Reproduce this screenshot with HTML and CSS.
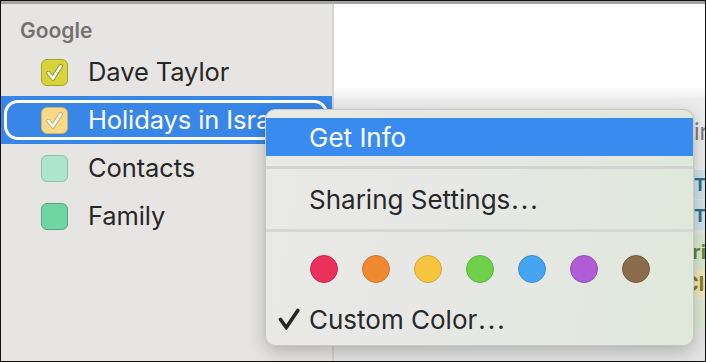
FILE: index.html
```html
<!DOCTYPE html>
<html>
<head>
<meta charset="utf-8">
<link rel="stylesheet" href="styles.css">
</head>
<body>
<div class="frame">
  <div class="topbar"></div>
  <div class="main">
    <aside class="sidebar">
      <div class="group">Google</div>
      <div class="row">
        <span class="box box-yellow"><svg viewBox="0 0 27 27" width="27" height="27"><path d="M7.5 14 L11.8 19.5 L19.8 7" class="ck-o"/><path d="M7.5 14 L11.8 19.5 L19.8 7" class="ck"/></svg></span>
        <span class="label">Dave Taylor</span>
      </div>
      <div class="row selected">
        <div class="ring">
          <span class="box box-pale"><svg viewBox="0 0 27 27" width="27" height="27"><path d="M7.5 14 L11.8 19.5 L19.8 7" class="ck-o light"/><path d="M7.5 14 L11.8 19.5 L19.8 7" class="ck"/></svg></span>
          <span class="label">Holidays in Israel</span>
        </div>
      </div>
      <div class="row">
        <span class="box box-mint"></span>
        <span class="label">Contacts</span>
      </div>
      <div class="row">
        <span class="box box-green"></span>
        <span class="label">Family</span>
      </div>
    </aside>
    <div class="divider"></div>
    <section class="calendar">
      <div class="cal-head"></div>
      <div class="cal-band"></div>
      <div class="cal-row r-gray"><span class="chip c-gray">Fair</span></div>
      <div class="cal-row r-blue"><span class="chip c-blue">T</span></div>
      <div class="cal-row r-blue2"><span class="chip c-blue">T</span></div>
      <div class="cal-row r-green"><span class="chip c-green">Fri</span></div>
      <div class="cal-row r-yellow"><span class="chip c-yellow">Cla</span></div>
      <div class="cal-row r-lgreen"><span class="chip c-lgreen"></span></div>
      <div class="cal-foot"></div>
    </section>
  </div>

  <div class="menu">
    <div class="item active">Get Info</div>
    <div class="sep"></div>
    <div class="item">Sharing Settings<span class="ell">...</span></div>
    <div class="sep sep2"></div>
    <div class="colors">
      <span class="dot d-red"></span>
      <span class="dot d-orange"></span>
      <span class="dot d-yellow"></span>
      <span class="dot d-green"></span>
      <span class="dot d-blue"></span>
      <span class="dot d-purple"></span>
      <span class="dot d-brown"></span>
    </div>
    <div class="item checked">
      <svg class="check" viewBox="0 0 22 22" width="22" height="22"><path d="M2.5 11.5 L8.3 19.5 L19.8 2.5"/></svg>
      Custom Color<span class="ell">...</span>
    </div>
  </div>
</div>
</body>
</html>
```

FILE: styles.css
```css
* { box-sizing: border-box; }
html, body { margin: 0; padding: 0; }
body {
  width: 706px;
  height: 362px;
  overflow: hidden;
  font-family: Inter, "Noto Sans", "Liberation Sans", sans-serif;
  background: #000;
}
.frame {
  position: relative;
  width: 706px;
  height: 362px;
  border: 1px solid #111;
  background: #e7e5e4;
  overflow: hidden;
  display: flex;
  flex-direction: column;
}
.topbar {
  height: 3px;
  background: #a4a4a4;
  flex: none;
}
.main {
  flex: 1;
  display: flex;
  min-height: 0;
}
.sidebar {
  width: 331px;
  flex: none;
  background: #e7e5e4;
}
.group {
  height: 44px;
  padding: 15px 0 0 19px;
  font-size: 21px;
  line-height: 24px;
  font-weight: 600;
  color: #737271;
}
.row {
  height: 48px;
  display: flex;
  align-items: center;
  padding-left: 40px;
  gap: 20px;
}
.row.selected {
  background: #3786e8;
  padding: 4px 4px 4px 3px;
}
.ring {
  flex: 1;
  height: 40px;
  border: 3px solid #fff;
  border-radius: 14px;
  display: flex;
  align-items: center;
  padding-left: 34px;
  gap: 20px;
}
.label {
  font-size: 25.5px;
  line-height: 30px;
  color: #272727;
  white-space: nowrap;
  letter-spacing: -0.1px;
}
.selected .label { color: #fff; }
.box {
  width: 27px;
  height: 27px;
  border-radius: 6px;
  flex: none;
  border: 1px solid;
  display: block;
  overflow: hidden;
}
.box svg { display: block; margin: -1px; }
.box-yellow { background: #d7d338; border-color: #a8a42b; }
.box-pale { background: #f6da89; border-color: #cbb163; }
.box-mint { background: #ace5cc; border-color: #8cc3aa; }
.box-green { background: #6fd5a3; border-color: #52ab80; }
.ck-o { fill: none; stroke: rgba(90, 85, 20, 0.55); stroke-width: 4.4; stroke-linecap: round; stroke-linejoin: round; }
.ck-o.light { stroke: rgba(150, 120, 50, 0.5); }
.ck { fill: none; stroke: #fff; stroke-width: 2.6; stroke-linecap: round; stroke-linejoin: round; }

.divider {
  width: 2px;
  flex: none;
  background: #d4d4d4;
}
.calendar {
  flex: 1;
  display: flex;
  flex-direction: column;
  background: #e6e6e6;
  min-width: 0;
}
.cal-head { height: 84px; background: #fff; flex: none; }
.cal-band { height: 10px; background: linear-gradient(#fbfbfb, #f1f1f1); flex: none; }
.cal-row {
  display: flex;
  justify-content: flex-end;
  flex: none;
}
.r-gray { height: 72px; background: #ececec; align-items: flex-start; }
.r-blue { height: 29px; }
.r-blue2 { height: 30px; margin-top: 1px; }
.r-green { height: 35px; margin-top: 4px; }
.r-yellow { height: 29px; }
.r-lgreen { height: 29px; margin-top: 2px; }
.cal-foot { flex: 1; background: #e4e4e4; }
.chip {
  width: 40px;
  height: 100%;
  overflow: hidden;
  white-space: nowrap;
  font-weight: 700;
  font-size: 20px;
  display: flex;
  align-items: center;
}
.c-gray { background: #ececec; color: #7a7a7a; font-weight: 400; font-size: 23px; padding-left: 23px; height: 72px; align-items: flex-start; padding-top: 20px; text-indent: -20px; }
.c-blue { background: #cfe2ea; color: #2d6c86; padding-left: 29px; font-size: 18px; }
.c-green { background: #dde9d1; color: #5b8a36; padding-left: 16px; }
.c-yellow { background: #f1e7bd; color: #8a7a24; padding-left: 19px; }
.c-lgreen { background: #dcebd4; }

.menu {
  position: absolute;
  left: 264px;
  top: 108px;
  width: 429px;
  height: 237px;
  border-radius: 10px;
  border: 1px solid rgba(0, 0, 0, 0.13);
  background: linear-gradient(100deg, #e9e9e8 0%, #e7e8e5 45%, #dfe8da 100%);
  box-shadow: 0 6px 18px rgba(0, 0, 0, 0.22), 0 0 2px rgba(0, 0, 0, 0.1);
  padding-top: 8px;
  overflow: hidden;
}
.item {
  height: 38px;
  display: flex;
  align-items: center;
  padding-left: 43px;
  font-size: 26px;
  color: #282828;
  white-space: nowrap;
  position: relative;
}
.ell { letter-spacing: 2px; margin-left: 1px; }
.item.active {
  background: #3a8bef;
  color: #fff;
}
.sep {
  height: 3px;
  background: #d3d4d2;
  margin: 10px 0 11px;
}
.sep2 { margin: 11px 0 0; background: #d5d7d2; }
.colors {
  display: flex;
  gap: 24px;
  padding: 23px 0 0 44px;
}
.dot {
  width: 28px;
  height: 28px;
  border-radius: 50%;
  flex: none;
  border: 1px solid;
}
.d-red { background: #e9315a; border-color: #c9284b; }
.d-orange { background: #f08a31; border-color: #cf7528; }
.d-yellow { background: #f6c43e; border-color: #d7a733; }
.d-green { background: #6fd04b; border-color: #5ab33d; }
.d-blue { background: #45a5f1; border-color: #3a8fd2; }
.d-purple { background: #b15bd7; border-color: #954bb8; }
.d-brown { background: #8c6c4b; border-color: #735a3e; }
.item.checked { margin-top: 17px; }
.check {
  position: absolute;
  left: 12px;
  top: 8px;
}
.check path {
  fill: none;
  stroke: #262626;
  stroke-width: 3.6;
  stroke-linecap: round;
  stroke-linejoin: miter;
}
```
